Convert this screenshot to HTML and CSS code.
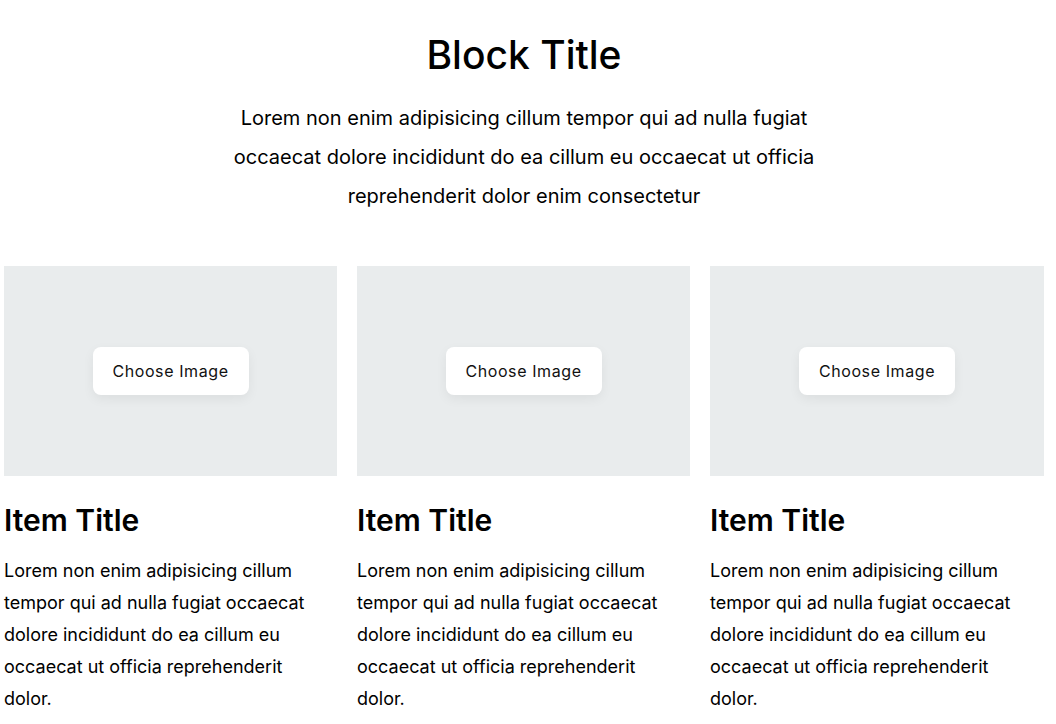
FILE: index.html
```html
<!DOCTYPE html>
<html lang="en">
<head>
  <meta charset="UTF-8" />
  <meta name="viewport" content="width=device-width, initial-scale=1.0"/>
  <title>Block</title>
  <link rel="stylesheet" href="styles.css">
</head>
<body>

  <section class="block">
    <header class="block-head">
      <h1 class="block-title">Block Title</h1>
      <p class="block-lead">Lorem non enim adipisicing cillum tempor qui ad nulla fugiat occaecat dolore incididunt do ea cillum eu occaecat ut officia reprehenderit dolor enim consectetur</p>
    </header>

    <div class="items">
      <div class="item">
        <div class="item-media">
          <button class="choose-btn" type="button">Choose Image</button>
        </div>
        <h2 class="item-title">Item Title</h2>
        <p class="item-text">Lorem non enim adipisicing cillum tempor qui ad nulla fugiat occaecat dolore incididunt do ea cillum eu occaecat ut officia reprehenderit dolor.</p>
      </div>
      <div class="item">
        <div class="item-media">
          <button class="choose-btn" type="button">Choose Image</button>
        </div>
        <h2 class="item-title">Item Title</h2>
        <p class="item-text">Lorem non enim adipisicing cillum tempor qui ad nulla fugiat occaecat dolore incididunt do ea cillum eu occaecat ut officia reprehenderit dolor.</p>
      </div>
      <div class="item">
        <div class="item-media">
          <button class="choose-btn" type="button">Choose Image</button>
        </div>
        <h2 class="item-title">Item Title</h2>
        <p class="item-text">Lorem non enim adipisicing cillum tempor qui ad nulla fugiat occaecat dolore incididunt do ea cillum eu occaecat ut officia reprehenderit dolor.</p>
      </div>
    </div>
  </section>

</body>
</html>
```

FILE: styles.css
```css
* { box-sizing: border-box; margin: 0; padding: 0; }

body {
  font-family: 'Inter', sans-serif;
  background-color: #fff;
  color: #000;
}

.block {
  width: 1040px;
  margin-left: 4px;
  padding-top: 31px;
}

.block-head {
  text-align: center;
}

.block-title {
  font-size: 39px;
  font-weight: 500;
  line-height: 48px;
}

.block-lead {
  max-width: 610px;
  margin: 20px auto 0;
  font-size: 20px;
  line-height: 39px;
}

.items {
  display: grid;
  grid-template-columns: 333px 333px 334px;
  gap: 20px;
  margin-top: 50px;
}

/* image placeholder */
.item-media {
  height: 210px;
  background-color: #e9eced;
  display: flex;
  align-items: center;
  justify-content: center;
}

.choose-btn {
  font-family: 'Inter', sans-serif;
  font-size: 16px;
  letter-spacing: 0.6px;
  color: #111;
  background-color: #fff;
  border: none;
  border-radius: 8px;
  width: 156px;
  height: 48px;
  box-shadow: 0 4px 12px rgba(0,0,0,0.06);
  cursor: pointer;
}

.item-title {
  margin-top: 24px;
  font-size: 30px;
  font-weight: 600;
  line-height: 40px;
}

.item-text {
  max-width: 318px;
  margin-top: 15px;
  font-size: 18px;
  line-height: 32px;
}
```
